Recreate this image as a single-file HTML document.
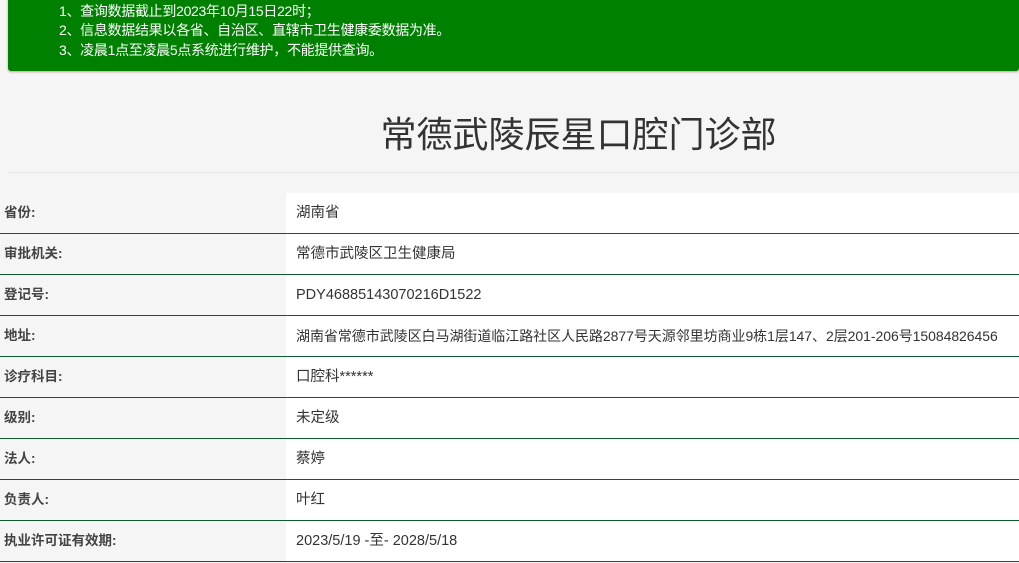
<!DOCTYPE html>
<html><head><meta charset="utf-8"><style>
body{margin:0;width:1019px;height:563px;overflow:hidden;background:#f5f5f5;font-family:"Liberation Sans","Noto Sans CJK SC",sans-serif;}
.notice{position:absolute;left:8px;top:-2px;width:1011px;height:73px;background:#008000;border-radius:0 0 3px 3px;box-shadow:0 1px 2px #c99;}
.notice div{position:absolute;left:51px;color:#fff;font-size:14px;line-height:19px;letter-spacing:-0.3px;}
h1{position:absolute;left:0;top:112px;width:1157px;text-align:center;margin:0;font-weight:normal;font-size:36px;color:#333;line-height:46px;}
.hr{position:absolute;left:8px;top:172px;width:1011px;height:1px;background:#e6e6e6;}
.row{position:absolute;left:0;width:1019px;height:40px;border-bottom:1px solid #0f5b2f;}
.lab{position:absolute;left:0;top:0;width:286px;height:40px;line-height:40px;padding-left:4px;box-sizing:border-box;font-size:13.5px;font-weight:bold;color:#444;}
.val{position:absolute;left:286px;top:0;right:0;height:40px;background:#fff;line-height:40px;padding-left:10px;font-size:14.5px;color:#333;white-space:nowrap;}
</style></head><body>
<div class="notice">
<div style="top:4px">1、查询数据截止到2023年10月15日22时；</div>
<div style="top:23px">2、信息数据结果以各省、自治区、直辖市卫生健康委数据为准。</div>
<div style="top:43px">3、凌晨1点至凌晨5点系统进行维护，不能提供查询。</div>
</div>
<h1>常德武陵辰星口腔门诊部</h1>
<div class="hr"></div>
<div class="row" style="top:193px"><div class="lab">省份:</div><div class="val">湖南省</div></div>
<div class="row" style="top:234px"><div class="lab">审批机关:</div><div class="val">常德市武陵区卫生健康局</div></div>
<div class="row" style="top:275px"><div class="lab">登记号:</div><div class="val">PDY46885143070216D1522</div></div>
<div class="row" style="top:316px"><div class="lab">地址:</div><div class="val" style="font-size:14px;letter-spacing:-0.05px">湖南省常德市武陵区白马湖街道临江路社区人民路2877号天源邻里坊商业9栋1层147、2层201-206号15084826456</div></div>
<div class="row" style="top:357px"><div class="lab">诊疗科目:</div><div class="val">口腔科******</div></div>
<div class="row" style="top:398px"><div class="lab">级别:</div><div class="val">未定级</div></div>
<div class="row" style="top:439px"><div class="lab">法人:</div><div class="val">蔡婷</div></div>
<div class="row" style="top:480px"><div class="lab">负责人:</div><div class="val">叶红</div></div>
<div class="row" style="top:521px"><div class="lab">执业许可证有效期:</div><div class="val">2023/5/19 -至- 2028/5/18</div></div>
</body></html>
